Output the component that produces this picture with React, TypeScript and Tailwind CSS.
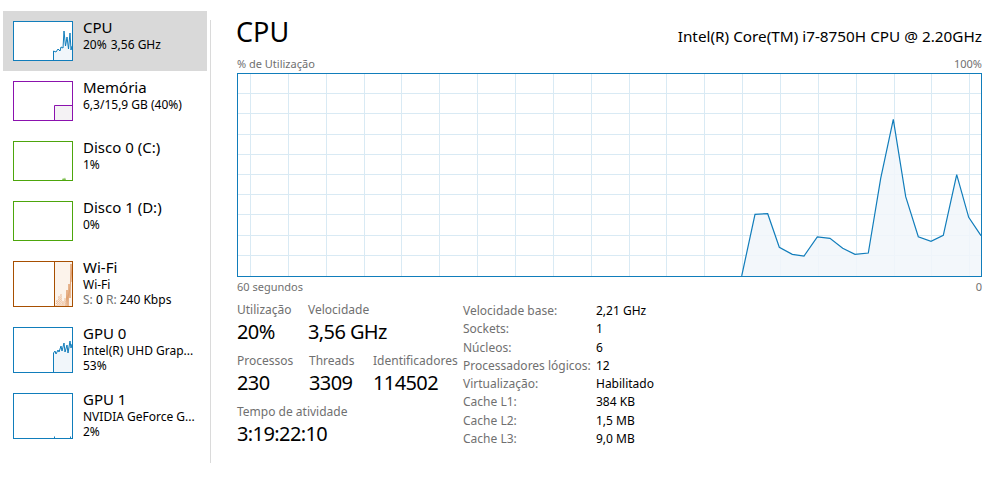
import React from "react";

const chartPts: [number, number][] = [
  [503.7, 202], [517, 140.3], [529.7, 139.7], [541.3, 173.3], [554.3, 180.3],
  [566, 182], [579.3, 163], [592, 164.3], [604.7, 174.3], [617, 180.3],
  [630.3, 179], [642.7, 104.3], [655.3, 45.3], [667.7, 122.7], [680.3, 162.7],
  [693, 167.3], [705.3, 161.3], [718.7, 100.7], [730.7, 143.3], [743, 161.7],
];

function toLine(pts: [number, number][]) {
  return pts.map((p) => p.join(",")).join(" ");
}

function Thumb({
  border,
  tall,
  children,
}: {
  border: string;
  tall?: boolean;
  children?: React.ReactNode;
}) {
  return (
    <div className={`w-[60px] shrink-0 border bg-white ${border} ${tall ? "h-[46px]" : "h-[40px]"}`}>
      <svg width="58" height={tall ? 44 : 38} className="block">
        {children}
      </svg>
    </div>
  );
}

function SideItem({
  selected,
  thumb,
  title,
  children,
}: {
  selected?: boolean;
  thumb: React.ReactNode;
  title: string;
  children: React.ReactNode;
}) {
  return (
    <div className={`flex w-[204px] py-[10px] pl-[10px] ${selected ? "bg-[#d9d9d9]" : ""}`}>
      {thumb}
      <div className="-mt-[4px] ml-[10px] text-black">
        <div className="text-[15px] leading-[20px]">{title}</div>
        <div className="text-[12px] leading-[15px]">{children}</div>
      </div>
    </div>
  );
}

function Stat({ label, value, w }: { label: string; value: string; w?: string }) {
  return (
    <div className={w}>
      <div className="text-[12px] leading-[16px] text-[#707070]">{label}</div>
      <div className="text-[20px] leading-[28px] tracking-[-0.6px] text-black">{value}</div>
    </div>
  );
}

const specs = [
  ["Velocidade base:", "2,21 GHz"],
  ["Sockets:", "1"],
  ["Núcleos:", "6"],
  ["Processadores lógicos:", "12"],
  ["Virtualização:", "Habilitado"],
  ["Cache L1:", "384 KB"],
  ["Cache L2:", "1,5 MB"],
  ["Cache L3:", "9,0 MB"],
];

export default function App() {
  const fillPts: [number, number][] = [...chartPts, [743, 202], [503.7, 202]];
  return (
    <div className="flex h-[480px] w-[1003px] overflow-hidden bg-white font-['Noto_Sans',sans-serif]">
      {/* sidebar */}
      <div className="flex flex-col pl-[3px] pt-[11px]">
        <SideItem
          selected
          title="CPU"
          thumb={
            <Thumb border="border-[#117dbb]">
              <polygon
                points="39.5,38 39.5,29 42,30 44,27 46,29 47,25 49,26 50,9 51.5,24 53,15 54.5,27 56,11 57,28 58,24 58,38"
                fill="#f1f6fa"
              />
              <polyline
                points="39.5,38 39.5,29 42,30 44,27 46,29 47,25 49,26 50,9 51.5,24 53,15 54.5,27 56,11 57,28 58,24"
                fill="none"
                stroke="#117dbb"
              />
            </Thumb>
          }
        >
          20%<span className="ml-[4px]">3,56 GHz</span>
        </SideItem>
        <SideItem
          title="Memória"
          thumb={
            <Thumb border="border-[#8b12ae]">
              <rect x="40" y="23.5" width="18" height="15" fill="#f4f2f4" />
              <polyline points="40.5,38 40.5,23.5 58,23.5" fill="none" stroke="#8b12ae" />
            </Thumb>
          }
        >
          6,3/15,9 GB (40%)
        </SideItem>
        <SideItem
          title="Disco 0 (C:)"
          thumb={
            <Thumb border="border-[#4da60c]">
              <polygon points="48,38 49,36 50,37 51,35.5 52,38" fill="#4da60c" opacity="0.7" />
            </Thumb>
          }
        >
          1%
        </SideItem>
        <SideItem title="Disco 1 (D:)" thumb={<Thumb border="border-[#4da60c]" />}>
          0%
        </SideItem>
        <SideItem
          title="Wi-Fi"
          thumb={
            <Thumb border="border-[#a74f01]" tall>
              <rect x="40" y="0" width="18" height="44" fill="#fcf3eb" />
              <line x1="40.5" y1="0" x2="40.5" y2="44" stroke="#a74f01" />
              <polyline
                points="42,44 43,38 44,44 45,34 46,44 47,32 48,44 49,39 50,44 51,36 52,44"
                fill="none"
                stroke="#eab48c"
                strokeDasharray="1 1"
              />
              <polyline
                points="52,44 53,28 54,44 55,22 56,36 57,2 58,20"
                fill="none"
                stroke="#e0a070"
              />
            </Thumb>
          }
        >
          <div>Wi-Fi</div>
          <div>
            <span className="text-[#707070]">S:</span> 0{" "}
            <span className="text-[#707070]">R:</span> 240 Kbps
          </div>
        </SideItem>
        <SideItem
          title="GPU 0"
          thumb={
            <Thumb border="border-[#117dbb]" tall>
              <polygon
                points="39.5,44 39.5,25 41,23 42,26 44,22 45,24 47,18 48,23 50,15 51,24 53,17 54,25 56,13 57,20 58,16 58,44"
                fill="#f1f6fa"
              />
              <polyline
                points="39.5,44 39.5,25 41,23 42,26 44,22 45,24 47,18 48,23 50,15 51,24 53,17 54,25 56,13 57,20 58,16"
                fill="none"
                stroke="#117dbb"
              />
            </Thumb>
          }
        >
          <div>Intel(R) UHD Grap...</div>
          <div>53%</div>
        </SideItem>
        <SideItem
          title="GPU 1"
          thumb={
            <Thumb border="border-[#117dbb]" tall>
              <rect x="40" y="42.5" width="1" height="1.5" fill="#117dbb" />
              <rect x="56" y="42.5" width="1" height="1.5" fill="#117dbb" />
            </Thumb>
          }
        >
          <div>NVIDIA GeForce G...</div>
          <div>2%</div>
        </SideItem>
      </div>

      {/* divider */}
      <div className="ml-[3px] mt-[20px] h-[443px] w-px bg-[#dadada]" />

      {/* main */}
      <div className="ml-[26px] flex w-[745px] flex-col pt-[14px]">
        <div className="flex items-baseline justify-between">
          <div className="-ml-[1px] text-[27px] leading-[36px] text-black">CPU</div>
          <div className="text-[15.3px] text-black">Intel(R) Core(TM) i7-8750H CPU @ 2.20GHz</div>
        </div>
        <div className="mt-[7px] flex justify-between text-[11px] leading-[14px] text-[#707070]">
          <span>% de Utilização</span>
          <span>100%</span>
        </div>
        <div className="mt-[2px] h-[204px] w-[745px] border border-[#117dbb]">
          <svg width="743" height="202" className="block">
            {Array.from({ length: 20 }, (_, k) => {
              const x = Math.round(12 + 37.86 * k) + 0.5;
              return <line key={"v" + k} x1={x} y1="0" x2={x} y2="202" stroke="#d9eaf4" />;
            })}
            {Array.from({ length: 9 }, (_, k) => {
              const y = Math.round(20.2 * (k + 1)) - 0.5;
              return <line key={"h" + k} x1="0" y1={y} x2="743" y2={y} stroke="#d9eaf4" />;
            })}
            <polygon points={toLine(fillPts)} fill="#f1f6fa" fillOpacity="0.85" />
            <polyline points={toLine(chartPts)} fill="none" stroke="#117dbb" strokeWidth="1.2" />
          </svg>
        </div>
        <div className="mt-[3px] flex justify-between text-[11px] leading-[14px] text-[#707070]">
          <span>60 segundos</span>
          <span>0</span>
        </div>

        <div className="mt-[8px] flex">
          <div className="flex w-[226px] flex-col gap-[7px]">
            <div className="flex">
              <Stat label="Utilização" value="20%" w="w-[71px]" />
              <Stat label="Velocidade" value="3,56 GHz" />
            </div>
            <div className="flex">
              <Stat label="Processos" value="230" w="w-[72px]" />
              <Stat label="Threads" value="3309" w="w-[64px]" />
              <Stat label="Identificadores" value="114502" />
            </div>
            <Stat label="Tempo de atividade" value="3:19:22:10" />
          </div>
          <div className="grid grid-cols-[133px_auto] text-[12px] leading-[18px]">
            {specs.map(([k, v]) => (
              <React.Fragment key={k}>
                <div className="text-[#707070]">{k}</div>
                <div className="text-black">{v}</div>
              </React.Fragment>
            ))}
          </div>
        </div>
      </div>
    </div>
  );
}
